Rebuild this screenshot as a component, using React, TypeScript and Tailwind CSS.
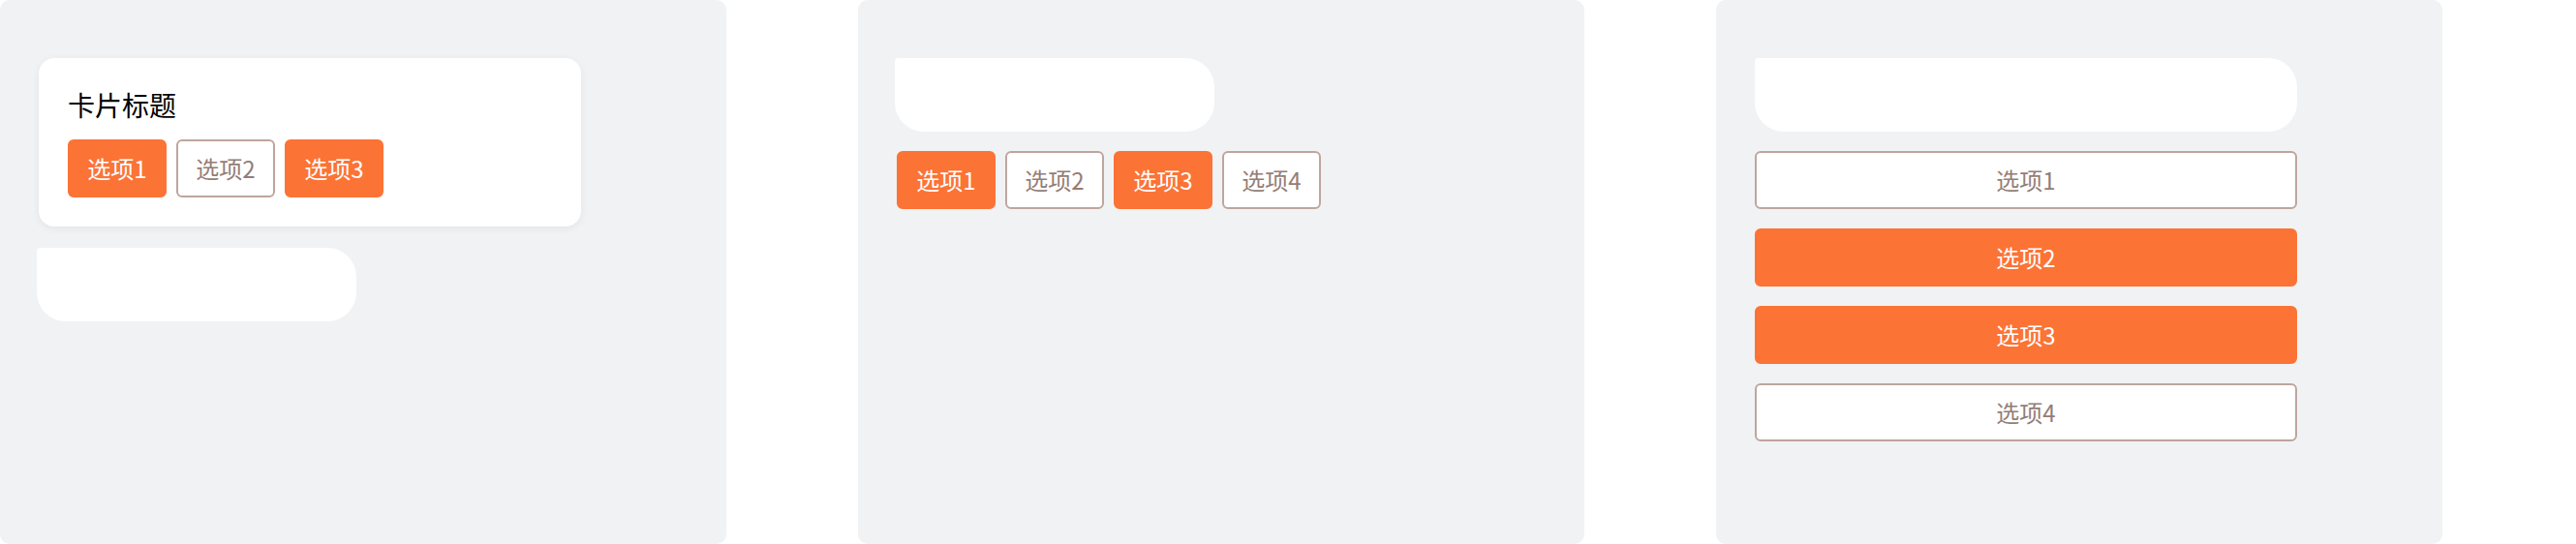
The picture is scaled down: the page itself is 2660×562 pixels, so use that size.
import React from "react";

const font = { fontFamily: '"Noto Sans CJK SC", "Noto Sans", sans-serif' };

interface OptionProps {
  label: string;
  active?: boolean;
  block?: boolean;
}

const Option: React.FC<OptionProps> = ({ label, active, block }) => {
  return (
    <div
      className={
        (block ? "w-full " : "w-[102px] ") +
        (active
          ? "border-[#fc7336] bg-[#fc7336] text-white "
          : "border-[#bea59e] bg-white text-[#947d76] ") +
        "flex h-[60px] items-center justify-center rounded-[6px] border-2 text-[24px] leading-none"
      }
    >
      {label}
    </div>
  );
};

const Blob: React.FC<{ wide?: boolean }> = ({ wide }) => (
  <div
    className={
      (wide ? "w-[560px] " : "-ml-[2px] w-[330px] ") +
      "h-[76px] rounded-[30px] rounded-tl-[4px] bg-white"
    }
  />
);

export default function App() {
  return (
    <div className="flex h-[562px] w-[2660px] gap-[136px] bg-white" style={font}>
      {/* panel 1 */}
      <div className="h-[562px] w-[750px] shrink-0 rounded-[10px] bg-[#f1f2f4] px-[40px] pt-[60px]">
        <div className="w-[560px] rounded-[16px] bg-white px-[30px] pt-[30px] pb-[30px] shadow-[0_2px_8px_rgba(0,0,0,0.06)]">
          <h3 className="mb-[18px] text-[28px] leading-[36px] text-black">卡片标题</h3>
          <div className="flex gap-[10px]">
            <Option label="选项1" active />
            <Option label="选项2" />
            <Option label="选项3" active />
          </div>
        </div>
        <div className="mt-[22px]">
          <Blob />
        </div>
      </div>

      {/* panel 2 */}
      <div className="h-[562px] w-[750px] shrink-0 rounded-[10px] bg-[#f1f2f4] px-[40px] pt-[60px]">
        <Blob />
        <div className="mt-[20px] flex gap-[10px]">
          <Option label="选项1" active />
          <Option label="选项2" />
          <Option label="选项3" active />
          <Option label="选项4" />
        </div>
      </div>

      {/* panel 3 */}
      <div className="h-[562px] w-[750px] shrink-0 rounded-[10px] bg-[#f1f2f4] px-[40px] pt-[60px]">
        <div className="flex w-[560px] flex-col gap-[20px]">
          <Blob wide />
          <Option label="选项1" block />
          <Option label="选项2" active block />
          <Option label="选项3" active block />
          <Option label="选项4" block />
        </div>
      </div>
    </div>
  );
}
